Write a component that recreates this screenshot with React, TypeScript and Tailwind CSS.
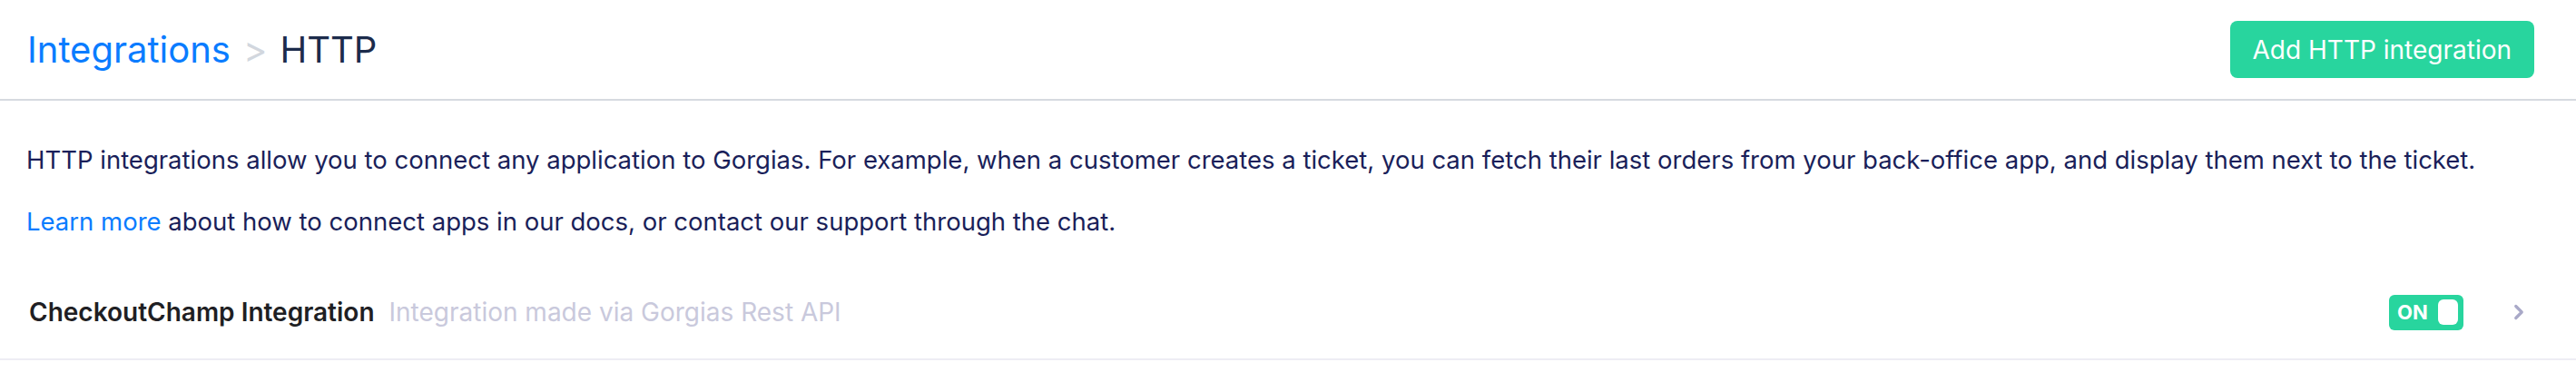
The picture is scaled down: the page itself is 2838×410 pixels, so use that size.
import { ChevronRight } from "lucide-react";

const Header = () => {
  return (
    <div className="flex items-center justify-between h-[111px] pl-[30px] pr-[46px] border-b-2 border-[#d6dae0]">
      <div className="flex items-center text-[40px] leading-none">
        <a className="text-[#0a7cff]" href="#">
          Integrations
        </a>
        <span className="mx-[14px] text-[#d2d7de]">&gt;</span>
        <span className="text-[#1c2b4b]">HTTP</span>
      </div>
      <button className="h-[63px] px-[25px] rounded-lg bg-[#28d59e] text-white text-[28px] leading-none">
        Add HTTP integration
      </button>
    </div>
  );
};

const Toggle = () => {
  return (
    <div className="flex items-center justify-between w-[82px] h-[39px] pl-[9px] pr-[6px] rounded-md bg-[#28d59e]">
      <span className="text-white text-[22px] font-bold leading-none">ON</span>
      <span className="w-[22px] h-[28px] rounded-md bg-white" />
    </div>
  );
};

const IntegrationRow = () => {
  return (
    <div className="flex items-center justify-between h-[104px] pl-[32px] pr-[50px] border-b-2 border-[#eeedf4]">
      <div className="flex items-center gap-[16px] text-[28px]">
        <span className="font-semibold text-[#1f1f24]">CheckoutChamp Integration</span>
        <span className="text-[#c9c9dc]">Integration made via Gorgias Rest API</span>
      </div>
      <div className="flex items-center gap-[48px]">
        <Toggle />
        <ChevronRight className="w-[26px] h-[26px] text-[#a9a9c8]" strokeWidth={3} />
      </div>
    </div>
  );
};

export default function App() {
  return (
    <div className="w-[2838px] h-[410px] bg-white font-['Inter',sans-serif]">
      <Header />
      <div className="flex flex-col gap-[30px] pt-[46px] px-[29px] text-[27.5px] leading-[38px] text-[#1a1f5a]">
        <p>
          HTTP integrations allow you to connect any application to Gorgias. For example, when a
          customer creates a ticket, you can fetch their last orders from your back-office app, and
          display them next to the ticket.
        </p>
        <p>
          <a className="text-[#0a7cff]" href="#">
            Learn more
          </a>{" "}
          about how to connect apps in our docs, or contact our support through the chat.
        </p>
      </div>
      <div className="mt-[30px]">
        <IntegrationRow />
      </div>
    </div>
  );
}
